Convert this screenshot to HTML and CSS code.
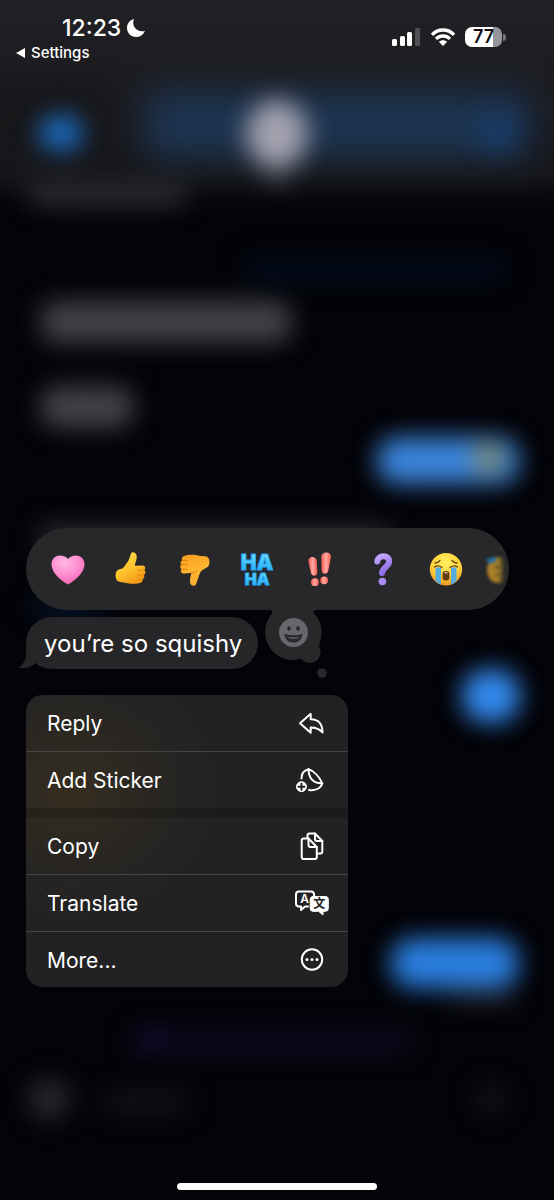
FILE: index.html
```html
<!DOCTYPE html>
<html lang="en">
<head>
<meta charset="utf-8">
<meta name="viewport" content="width=device-width, initial-scale=1">
<title>Messages</title>
<link rel="stylesheet" href="styles.css">
</head>
<body>
<div class="screen">
  <svg class="backdrop" viewBox="0 0 554 1200" preserveAspectRatio="none" aria-hidden="true">
    <defs>
      <linearGradient id="top-bar" x1="0" y1="0" x2="0" y2="1">
        <stop offset="0" stop-color="#212125"/>
        <stop offset=".5" stop-color="#1b1b20"/>
        <stop offset=".8" stop-color="#16161a"/>
        <stop offset=".92" stop-color="#08080c"/>
        <stop offset="1" stop-color="#030308"/>
      </linearGradient>
      <filter id="soft" filterUnits="userSpaceOnUse" x="-60" y="0" width="700" height="1200" color-interpolation-filters="sRGB"><feGaussianBlur stdDeviation="12"/></filter>
      <filter id="softer" filterUnits="userSpaceOnUse" x="-60" y="0" width="700" height="400" color-interpolation-filters="sRGB"><feGaussianBlur stdDeviation="18"/></filter>
    </defs>
    <rect width="554" height="1200" fill="#030308"/>
    <rect width="554" height="218" fill="url(#top-bar)"/>
    <g filter="url(#softer)">
      <rect x="-20" y="80" width="130" height="85" fill="#17171a"/>
      <rect x="145" y="92" width="385" height="66" fill="#1d3553"/>
    </g>
    <g filter="url(#soft)">
      <rect x="30" y="182" width="155" height="24" fill="#2c2c30"/>
      <rect x="40" y="116" width="42" height="34" rx="14" fill="#1c6cc0"/>
      <ellipse cx="277" cy="134" rx="31" ry="34" fill="#a3a2af"/>
      <rect x="264" y="168" width="26" height="16" fill="#34353e"/>
      <circle cx="497" cy="131" r="18" fill="#163c69"/>
      <rect x="245" y="256" width="260" height="26" fill="#030b1b"/>
      <rect x="40" y="301" width="252" height="42" rx="18" fill="#424247"/>
      <rect x="40" y="386" width="94" height="42" rx="18" fill="#424247"/>
      <rect x="40" y="525" width="350" height="30" fill="#292930"/>
      <rect x="377" y="437" width="142" height="47" rx="20" fill="#3b84da"/>
      <circle cx="488" cy="458" r="14" fill="#8b8c59"/>
      <rect x="462" y="669" width="58" height="54" rx="25" fill="#338aef"/>
      <rect x="450" y="990" width="65" height="13" fill="#242429"/>
      <rect x="391" y="938" width="128" height="50" rx="22" fill="#2a7edf"/>
      <rect x="132" y="1029" width="280" height="24" fill="#0d0b21"/>
      <circle cx="149" cy="1041" r="11" fill="#14113a"/>
      <circle cx="49" cy="1099" r="21" fill="#27272c"/>
      <rect x="105" y="1091" width="82" height="22" fill="#131317"/>
      <circle cx="491" cy="1099" r="16" fill="#131317"/>
      <ellipse cx="70" cy="608" rx="42" ry="9" fill="#071a30"/>
    </g>
  </svg>

  <header class="status">
    <div class="status-left">
      <div class="clock">
        <time>12:23</time>
        <svg class="moon" viewBox="0 0 20 20" aria-label="Do not disturb"><path d="M8 1C5 8 11 15 19 13C17 17 14 19 10 19C5 19 1 15 1 10C1 5.500 4 2 8 1Z" fill="#fff"/></svg>
      </div>
      <a class="back" href="#settings"><svg viewBox="0 0 10 10" aria-hidden="true"><path d="M0 5L9 0V10Z" fill="#fff"/></svg>Settings</a>
    </div>
    <div class="status-right">
      <svg class="signal" viewBox="0 0 30 20" aria-label="Signal strength">
        <g fill="#fff"><rect x="1" y="12" width="5" height="7" rx="1.500"/><rect x="9" y="9" width="5" height="10" rx="1.500"/><rect x="16" y="5" width="5" height="14" rx="1.500"/></g>
        <rect x="24" y="1" width="5" height="18" rx="1.500" fill="#505055"/>
      </svg>
      <svg class="wifi" viewBox="0 0 26 20" aria-label="Wi-Fi">
        <g fill="none" stroke="#fff" stroke-width="3.400"><path d="M2 7.800C8 1.300 18 1.300 24 7.800"/><path d="M6 11.900C10 8 16 8 20 11.900"/></g>
        <path d="M13 19L8.800 14.700C11 12.600 15 12.600 17.200 14.700Z" fill="#fff"/>
      </svg>
      <div class="battery"><span>77</span></div>
    </div>
  </header>

  <main class="focus">
    <div class="reactions" role="group" aria-label="Reactions">
      <button class="reaction" aria-label="Heart">
        <svg viewBox="0 0 36 36"><defs><radialGradient id="heart" cx=".4" cy=".25" r=".8"><stop stop-color="#ffb9e4"/><stop offset=".55" stop-color="#ff8bd0"/><stop offset="1" stop-color="#f45fb3"/></radialGradient></defs>
        <path d="M18 33.500C10 29 1.500 21 1.500 13.500C1.500 8 5 4.500 9.800 4.500C13.500 4.500 16.500 6 18 8C19.500 6 22.500 4.500 26.200 4.500C31 4.500 34.500 8 34.500 13.500C34.500 21 26 29 18 33.500Z" fill="url(#heart)"/></svg>
      </button>
      <button class="reaction" aria-label="Thumbs up">
        <svg viewBox="0 0 36 36"><defs><linearGradient id="thumb" x1="0" y1="0" x2=".5" y2="1"><stop stop-color="#ffdc4a"/><stop offset=".6" stop-color="#ffc52d"/><stop offset="1" stop-color="#f39d18"/></linearGradient></defs>
        <path d="M18 2.500C19 .6 21.500 .8 23 3C25 6.500 22.500 10.500 21.800 14.700L29.500 14.600C32.300 14.700 32.900 17.300 31.500 18.900C33 20.700 32.600 22.800 31 23.800C31.800 25.600 31.300 27.400 29.700 28.200C29.800 30.300 28.600 31.800 26.600 32C22 33.200 16.500 33 13 32C10 31.300 8 31.500 5 30.300C2 28.500 2 21.800 4 19.700C6 17.700 9 18.600 11 16C14 12 16.500 8.500 17 5.500Z" fill="url(#thumb)"/>
        <g fill="none" stroke="#d98410" stroke-width=".9" stroke-linecap="round"><path d="M31.400 18.900Q27 20.200 24.500 19"/><path d="M31 23.800Q27 25 24.700 23.800"/><path d="M29.700 28.200Q26.500 29.200 24.800 28.200"/></g></svg>
      </button>
      <button class="reaction" aria-label="Thumbs down">
        <svg viewBox="0 0 36 36"><defs><linearGradient id="thumb-down" x1="0" y1="0" x2=".3" y2="1"><stop stop-color="#f99b1b"/><stop offset=".55" stop-color="#ffb531"/><stop offset="1" stop-color="#ffae34"/></linearGradient></defs>
        <path d="M8 5C13 3 20 3.800 24 5C28 5.200 31 4.800 32.500 7.200C34 10 34 14 31.500 16C29 18 26 18.500 24.500 21C22.500 25 21.800 29 20.400 32.500C19.500 35.500 15.500 35.300 14.400 32.700C13.300 29.300 14.600 25.700 15.300 22.100L8 22.600C5 22.700 4.200 20 5.500 18.200C3.800 17.100 3.800 14.800 5.200 13.700C4 12.300 4.600 10.200 6.200 9.600C5.400 7.500 6.300 5.600 8 5Z" fill="url(#thumb-down)"/>
        <g fill="none" stroke="#d47a10" stroke-width=".9" stroke-linecap="round"><path d="M6.200 9.600Q9.500 8.500 11.500 9.700"/><path d="M5.200 13.700Q9 13 11.500 14.200"/><path d="M5.500 18.200Q9 17.500 11.500 18.700"/><path d="M15.500 22C18 22 20 21 21 19.500"/></g></svg>
      </button>
      <button class="reaction" aria-label="Ha ha">
        <svg viewBox="0 0 36 36"><defs><linearGradient id="haha" x1="0" y1="0" x2="0" y2="1"><stop stop-color="#8be2ff"/><stop offset=".5" stop-color="#45c4fd"/><stop offset="1" stop-color="#1fa5f3"/></linearGradient></defs>
        <g class="haha-text" fill="url(#haha)" text-anchor="middle"><text class="haha-big" x="18" y="19">HA</text><text class="haha-small" x="18" y="34">HA</text></g></svg>
      </button>
      <button class="reaction" aria-label="Exclamation">
        <svg viewBox="0 0 36 36"><defs><linearGradient id="bang"><stop stop-color="#ff5f55"/><stop offset=".5" stop-color="#ffaaa2"/><stop offset="1" stop-color="#f7544c"/></linearGradient></defs>
        <g fill="url(#bang)"><path d="M6.500 10.500C6 4.800 14 4.200 14.800 9.800L15.300 21.500C15.300 25.500 10 25.700 9 22Z"/><path d="M19.300 5.500C20 0 29.300 .2 29 6L26.200 20C25 24 19.700 23.300 19.700 19.500Z"/><circle cx="13" cy="31.200" r="3.900"/><circle cx="22.200" cy="29.300" r="3.900"/></g></svg>
      </button>
      <button class="reaction" aria-label="Question">
        <svg viewBox="0 0 36 36"><defs><linearGradient id="ask" x1="0" y1="0" x2=".3" y2="1"><stop stop-color="#c7a6ff"/><stop offset="1" stop-color="#9170e4"/></linearGradient></defs>
        <path d="M12.300 10.500C13 3.500 24 3.300 24.200 10.300C24.300 15.500 17.500 16.500 17 22" fill="none" stroke="url(#ask)" stroke-width="6" stroke-linecap="round"/><circle cx="17.400" cy="30.500" r="3.800" fill="#a98af0"/></svg>
      </button>
      <button class="reaction" aria-label="Loudly crying">
        <svg viewBox="0 0 36 36"><defs><radialGradient id="cry" cx=".5" cy=".3" r=".7"><stop stop-color="#fff063"/><stop offset=".6" stop-color="#ffd33b"/><stop offset="1" stop-color="#ed9720"/></radialGradient></defs>
        <circle cx="18" cy="18.200" r="16.200" fill="url(#cry)"/>
        <path d="M7.500 16.500H13V33.500Q10 32.500 7.500 30Z" fill="#55acdf"/><path d="M23 16.500H28.500V30Q26 32.500 23 33.500Z" fill="#55acdf"/>
        <g fill="none" stroke="#68410f" stroke-width="1.300" stroke-linecap="round"><path d="M6.500 16Q10 13.500 14 16.500"/><path d="M22 16.500Q26 13.500 29.500 16"/><path d="M7 12Q10 12 12 9.500"/><path d="M24 9.500Q26 12 29 12"/></g>
        <rect x="14.500" y="20" width="7" height="9.500" rx="3.300" fill="#673d12"/><path d="M15.700 22.300Q18 20 20.300 22.300Z" fill="#fff"/></svg>
      </button>
      <button class="reaction reaction-next" aria-label="More reactions">
        <svg viewBox="0 0 36 36"><defs><linearGradient id="next"><stop stop-color="#b07a25"/><stop offset=".5" stop-color="#a08029"/><stop offset=".8" stop-color="#28282a"/></linearGradient><filter id="next-blur" x="-30%" y="-30%" width="160%" height="160%" color-interpolation-filters="sRGB"><feGaussianBlur stdDeviation="1.500"/></filter></defs>
        <g filter="url(#next-blur)"><ellipse cx="21" cy="19" rx="11" ry="13" fill="url(#next)"/><path d="M9 8L18 6L20 10L12 13Z" fill="#286fa5"/><circle cx="20" cy="16" r="1.500" fill="#4a3517"/><path d="M18 23Q20 26 23 23Z" fill="#4a3517"/></g></svg>
      </button>
    </div>

    <div class="message-row">
      <p class="bubble">you’re so squishy
        <svg class="tail" viewBox="0 0 30 24" aria-hidden="true"><path d="M8 -4V9C8 16 4 21 0 22.500C6 24.500 13 22.500 17.400 18L28 14V-4Z" fill="#262629"/></svg>
      </p>
      <button class="tapback" aria-label="Choose an emoji">
        <svg viewBox="0 0 64 72">
          <path d="M4 0H60V3C56 3 52 3.500 52.500 7C57 11 60.500 18 60.500 26C60.500 32 59 36 58 40C62 47 58 57 49 57C45 57 42 55 40 52.500Q36 54 32 54A28 28 0 0 1 11.500 7C12 4 8 3 4 3Z" fill="#28282a"/>
          <circle cx="61" cy="67" r="4.800" fill="#28282a"/>
          <circle cx="32.500" cy="26.500" r="14.500" fill="#66666b"/>
          <ellipse cx="28" cy="22.500" rx="1.700" ry="2.200" fill="#28282a"/><ellipse cx="37" cy="22.500" rx="1.700" ry="2.200" fill="#28282a"/>
          <path d="M23.500 28Q32.500 30.500 41.500 28C41 34 37 36.500 32.500 36.500S24 34 23.500 28Z" fill="#28282a"/><path d="M26 30.800Q32.500 32.300 39 30.800Q36.500 33 32.500 33T26 30.800Z" fill="#66666b"/>
        </svg>
      </button>
    </div>

    <nav class="menu" aria-label="Message actions">
      <button class="item"><span>Reply</span>
        <svg viewBox="0 0 36 36" class="line"><path d="M6 18.300L16.700 8.800V14.200C24 14 28.500 18.500 28.500 27.500C25.500 23.500 22 22.400 16.700 22.400V27.800Z"/></svg>
      </button>
      <button class="item"><span>Add Sticker</span>
        <svg viewBox="0 0 36 36" class="line"><path d="M7.500 16.500C7.500 12.500 9.800 8.500 14.500 7.300C20 9 25.500 15 28.300 21.300C26.500 26.500 21 28.800 15 28"/><path d="M14.500 7.300C14.500 14.500 18 21.500 28.300 21.300"/><circle cx="7.500" cy="24.700" r="5" class="solid"/><path d="M4.500 24.700H10.500M7.500 21.700V27.700" class="cut"/></svg>
      </button>
      <div class="gap" role="separator"></div>
      <button class="item"><span>Copy</span>
        <svg viewBox="0 0 36 36" class="line"><path d="M13.500 9.500V7.500Q13.500 5.500 15.500 5.500H21L28.300 13V23.500Q28.300 25.500 26.300 25.500H23"/><path d="M21 5.500V11Q21 13 23 13H28.300"/><path d="M9.700 10.500H14.500L22.800 19V29Q22.800 31 20.800 31H9.700Q7.700 31 7.700 29V12.500Q7.700 10.500 9.700 10.500Z"/><path d="M14.500 10.500V17Q14.500 19 16.500 19H22.800"/></svg>
      </button>
      <button class="item"><span>Translate</span>
        <svg viewBox="0 0 36 36" class="line"><path d="M14 21.500H11L7 25V21.500H5Q2 21.500 2 18.500V9.500Q2 6.500 5 6.500H17Q20 6.500 20 9.500V11"/><path d="M19 11.500H31.500Q34.300 11.500 34.300 14.300V23.500Q34.300 26.300 31.500 26.300H29V30L24.500 26.300H19Q16.200 26.300 16.200 23.500V14.300Q16.200 11.500 19 11.500Z" class="solid"/><text x="10.500" y="18" class="latin">A</text><text x="25.300" y="23" class="han">文</text></svg>
      </button>
      <button class="item"><span>More...</span>
        <svg viewBox="0 0 36 36" class="line"><circle cx="18" cy="17.500" r="10.200"/><g class="dots"><circle cx="13" cy="17.500" r="1.500"/><circle cx="18" cy="17.500" r="1.500"/><circle cx="23" cy="17.500" r="1.500"/></g></svg>
      </button>
    </nav>
  </main>
  <div class="home-indicator"></div>
</div>
</body>
</html>
```

FILE: styles.css
```css
* { box-sizing: border-box; }

body {
  margin: 0;
  background: #030308;
  color: #fff;
  font-family: Inter, "Liberation Sans", sans-serif;
}

button {
  margin: 0;
  padding: 0;
  border: 0;
  background: none;
  color: inherit;
  font: inherit;
  cursor: pointer;
}

svg { display: block; flex: none; overflow: visible; }

.screen {
  position: relative;
  isolation: isolate;
  display: flex;
  flex-direction: column;
  min-height: 100vh;
  overflow: hidden;
}

.backdrop {
  position: absolute;
  inset: 0;
  z-index: -1;
  width: 100%;
  height: 100%;
  overflow: hidden;
}

.status {
  display: flex;
  justify-content: space-between;
  padding: 16px 52px 0 16px;
}

.clock {
  display: flex;
  align-items: center;
  gap: 5px;
  padding-left: 46px;
  font-size: 23px;
  font-weight: 500;
  line-height: 24px;
}

.moon { width: 20px; height: 20px; }

.back {
  display: flex;
  align-items: center;
  gap: 5px;
  margin-top: 4px;
  color: #fff;
  font-size: 15px;
  font-weight: 500;
  line-height: 18px;
  text-decoration: none;
}

.back svg { width: 10px; height: 10px; }

.status-right {
  display: flex;
  align-items: center;
  align-self: flex-start;
  gap: 9px;
  padding-top: 11px;
}

.signal { width: 30px; height: 20px; }
.wifi { width: 26px; height: 20px; }

.battery {
  position: relative;
  width: 37px;
  height: 20px;
  border-radius: 7px;
  background: linear-gradient(90deg, #fff 77%, #97979b 77%);
  color: #101014;
  font-size: 18px;
  font-weight: 600;
  line-height: 20px;
  text-align: center;
}

.battery::after {
  content: "";
  position: absolute;
  top: 7px;
  right: -4px;
  width: 3px;
  height: 7px;
  border-radius: 0 3px 3px 0;
  background: #77777b;
}

.focus {
  display: flex;
  flex-direction: column;
  padding: 466px 45px 0 26px;
}

.reactions {
  display: flex;
  height: 82px;
  padding-left: 10px;
  border-radius: 41px;
  background: #28282a;
  overflow: hidden;
}

.reaction {
  display: flex;
  flex: none;
  align-items: center;
  justify-content: center;
  width: 63px;
}

.reaction svg { width: 36px; height: 36px; }
.reaction-next { justify-content: flex-start; }

.haha-text {
  font-family: Inter, sans-serif;
  font-weight: 900;
  stroke: #22a8f5;
  stroke-width: 1;
  stroke-linejoin: round;
}

.haha-big { font-size: 21px; }
.haha-small { font-size: 16px; }

.message-row {
  display: flex;
  align-items: flex-start;
  gap: 3px;
  margin-top: 7px;
}

.bubble {
  position: relative;
  margin: 0;
  padding: 12px 16px 10px 18px;
  border-radius: 26px;
  background: #262629;
  font-size: 24px;
  line-height: 30px;
}

.tail {
  position: absolute;
  left: -8px;
  bottom: 0;
  z-index: -1;
  width: 30px;
  height: 24px;
}

.tapback { margin-top: -11px; height: 72px; }
.tapback svg { width: 64px; height: 72px; }

.menu {
  width: 67%;
  max-width: 322px;
  margin-top: 17px;
  border-radius: 17px;
  background: radial-gradient(ellipse 150px 130px at 45px 95px, #352d20, #2a2722 50%, #222224);
  overflow: hidden;
}

.item {
  display: flex;
  align-items: center;
  justify-content: space-between;
  width: 100%;
  height: 56px;
  padding: 0 18px 0 21px;
  font-size: 21px;
  line-height: 28px;
  text-align: left;
}

.item + .item {
  height: 57px;
  border-top: 1px solid #454547;
}

.item:last-child { height: 56px; }

.item span { padding-top: 2px; }
.item svg { width: 36px; height: 36px; }
.gap { height: 10px; background: rgba(0, 0, 0, .18); }

.line {
  fill: none;
  stroke: #fff;
  stroke-width: 2;
  stroke-linecap: round;
  stroke-linejoin: round;
}

.solid { fill: #fff; stroke-width: 1; }
.cut { stroke: #222224; }
.dots { fill: #fff; stroke: none; }

.latin,
.han {
  fill: #fff;
  stroke: none;
  font-size: 12px;
  font-weight: 600;
  text-anchor: middle;
}

.han {
  fill: #222224;
  font-family: "Noto Sans CJK SC", sans-serif;
  font-weight: 700;
}

.home-indicator {
  align-self: center;
  width: 36%;
  height: 7px;
  margin-top: auto;
  margin-bottom: 10px;
  border-radius: 4px;
  background: #fff;
}
```
